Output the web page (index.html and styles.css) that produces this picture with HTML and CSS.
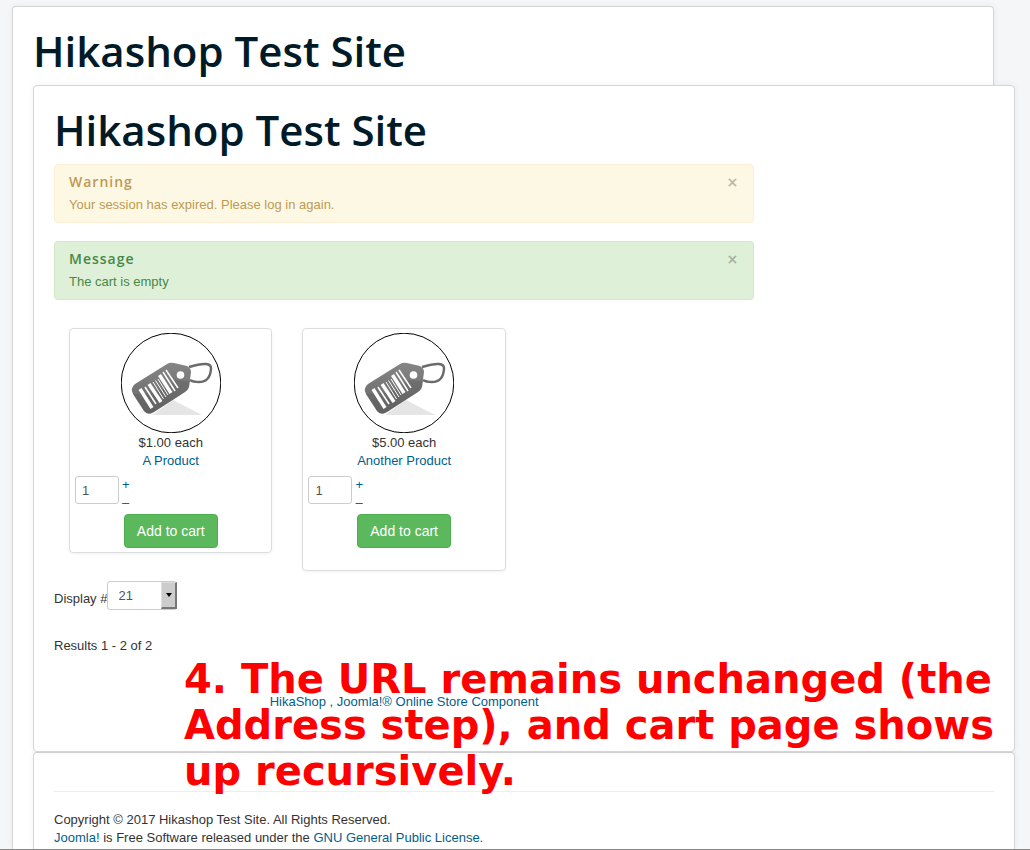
FILE: index.html
```html
<!DOCTYPE html>
<html lang="en">
<head>
  <meta charset="UTF-8">
  <meta name="viewport" content="width=device-width, initial-scale=1.0">
  <title>Hikashop Test Site</title>
  <link rel="stylesheet" href="styles.css">
</head>
<body>
  <!-- Shared product image -->
  <svg class="defs" width="0" height="0" aria-hidden="true">
    <defs>
      <linearGradient id="tagFill" x1="0" y1="0" x2="0" y2="1">
        <stop offset="0" stop-color="#858585"/>
        <stop offset="0.55" stop-color="#747474"/>
        <stop offset="1" stop-color="#666"/>
      </linearGradient>
      <symbol id="tag" viewBox="0 0 100 100">
        <circle cx="50" cy="50" r="49.8" fill="#fff" stroke="#000" stroke-width="1"/>
        <path d="M52 67 L81 82 H31 Z" fill="#e5e5e5"/>
        <path d="M14 51 L46 31 Q49 29 53 30 L66 33 Q70 35 70 39 L68 54 Q67 57 64 59 L33 79 Q27 83 23 78 L12 61 Q9 55 14 51 Z" fill="url(#tagFill)"/>
        <path d="M69 48 L68 54 Q67 57 64 59 L33 79 Q27 83 23 78 L12 61 Q44 62 54 47 Z" fill="#555" fill-opacity="0.3"/>
        <path d="M68 34 Q91 27 90 36 Q89 49 78 49 Q72 49 69 47" fill="none" stroke="#6b6b6b" stroke-width="2.5"/>
        <circle cx="59.500" cy="42" r="3.800" fill="#fff"/>
        <g stroke="#fff" fill="none">
          <path d="M19 56 L31 75" stroke-width="3.5"/>
          <path d="M24 54 L35 71" stroke-width="1.5"/>
          <path d="M28 51 L40 69" stroke-width="3.5"/>
          <path d="M32 49 L42.500 66" stroke-width="1"/>
          <path d="M34.500 47.500 L45 64" stroke-width="1"/>
          <path d="M37 46 L47 62" stroke-width="1"/>
          <path d="M38.500 42 L50 60" stroke-width="3.5"/>
          <path d="M42 39 L54 58" stroke-width="1.5"/>
          <path d="M45 37 L57 55" stroke-width="1.5"/>
        </g>
      </symbol>
    </defs>
  </svg>

  <div class="container outer">
    <h1 class="site-title">Hikashop Test Site</h1>

    <div class="container inner">
      <h1 class="site-title">Hikashop Test Site</h1>

      <main class="content">
        <div class="alert alert-warning">
          <button type="button" class="close" aria-label="Close">×</button>
          <h4>Warning</h4>
          <p>Your session has expired. Please log in again.</p>
        </div>
        <div class="alert alert-success">
          <button type="button" class="close" aria-label="Close">×</button>
          <h4>Message</h4>
          <p>The cart is empty</p>
        </div>

        <div class="products">
          <div class="product">
            <svg class="thumb" aria-hidden="true"><use href="#tag"/></svg>
            <span class="price">$1.00 each</span>
            <a href="#">A Product</a>
            <div class="quantity">
              <input type="text" value="1" aria-label="Quantity of A Product">
              <div class="steps">
                <a href="#">+</a>
                <a href="#">–</a>
              </div>
            </div>
            <button type="button" class="btn">Add to cart</button>
          </div>
          <div class="product tall">
            <svg class="thumb" aria-hidden="true"><use href="#tag"/></svg>
            <span class="price">$5.00 each</span>
            <a href="#">Another Product</a>
            <div class="quantity">
              <input type="text" value="1" aria-label="Quantity of Another Product">
              <div class="steps">
                <a href="#">+</a>
                <a href="#">–</a>
              </div>
            </div>
            <button type="button" class="btn">Add to cart</button>
          </div>
        </div>

        <div class="pagination">
          <label for="limit">Display #</label>
          <div class="select">
            <select id="limit">
              <option>21</option>
            </select>
            <span class="arrow"></span>
          </div>
        </div>
        <p class="results">Results 1 - 2 of 2</p>
        <p class="credit"><a href="#">HikaShop , Joomla!® Online Store Component</a></p>
      </main>

      <div class="note">4. The URL remains unchanged (the Address step), and cart page shows up recursively.</div>
    </div>

    <footer class="container footer">
      <hr>
      <p>Copyright © 2017 Hikashop Test Site. All Rights Reserved.</p>
      <p><a href="#">Joomla!</a> is Free Software released under the <a href="#">GNU General Public License.</a></p>
    </footer>
  </div>
</body>
</html>
```
FILE: styles.css
```css
* {
  box-sizing: border-box;
}
body {
  min-height: 100vh;
  margin: 0;
  padding: 6px 36px 0 12px;
  display: flex;
  flex-direction: column;
  background: #f4f6f7;
  border-bottom: 1px solid #888;
  color: #333;
  font-family: "Liberation Sans", Arial, sans-serif;
  font-size: 13px;
  line-height: 18px;
}
p {
  margin: 0;
}
a {
  color: #005e8d;
  text-decoration: none;
}
.defs {
  position: absolute;
}

.container {
  padding: 20px;
  background: #fff;
  border: 1px solid #d5d5d5;
  border-radius: 4px;
  box-shadow: 0 0 6px rgba(0,0,0,0.06);
}
.outer {
  flex: 1;
  display: flex;
  flex-direction: column;
  padding-bottom: 0;
  border-bottom: 0;
  border-radius: 4px 4px 0 0;
}
.inner, .footer {
  margin-right: -42px;
}
.inner {
  position: relative;
}
.footer {
  flex: 1;
  padding: 38px 20px 2px;
  border-bottom: 0;
  border-radius: 4px 4px 0 0;
}
.footer hr {
  margin: 0 0 19px;
  border: 0;
  border-top: 1px solid #eee;
}

.site-title {
  margin: 0 0 10px;
  color: #001a27;
  font-family: "Open Sans", sans-serif;
  font-size: 42px;
  font-weight: 600;
  line-height: 48px;
}
.content {
  width: 74.5%;
}

/* Messages */
.alert {
  position: relative;
  margin-bottom: 18px;
  padding: 8px 14px;
  border: 1px solid;
  border-radius: 4px;
}
.alert h4 {
  margin: 0 0 5px;
  font-family: "Open Sans", sans-serif;
  font-size: 14px;
  font-weight: 600;
  letter-spacing: 1px;
  line-height: 18px;
}
.alert-warning {
  background: #fcf8e3;
  border-color: #fbeed5;
  color: #c09853;
}
.alert-success {
  background: #dff0d8;
  border-color: #d0e9c6;
  color: #468847;
}
.close {
  position: absolute;
  top: 8px;
  right: 15px;
  padding: 0;
  border: 0;
  background: none;
  color: #000;
  font-family: "DejaVu Sans", sans-serif;
  font-size: 14px;
  font-weight: bold;
  line-height: 18px;
  opacity: 0.25;
}

/* Products */
.products {
  display: grid;
  grid-template-columns: repeat(3, 1fr);
  align-items: start;
  margin-top: 28px;
}
.product {
  display: flex;
  flex-direction: column;
  align-items: center;
  margin: 0 15px;
  padding: 4px 5px;
  border: 1px solid #ddd;
  border-radius: 4px;
  box-shadow: 0 1px 3px rgba(0,0,0,0.06);
}
.product.tall {
  padding-bottom: 22px;
}
.thumb {
  width: 100px;
  height: 100px;
  margin-bottom: 1px;
}
.quantity {
  display: flex;
  align-self: stretch;
  gap: 3px;
  margin: 6px 0 2px;
}
.quantity input {
  width: 44px;
  height: 28px;
  padding: 4px 6px;
  border: 1px solid #ccc;
  border-radius: 3px;
  color: #555;
  font-family: inherit;
  font-size: 13px;
}
.steps {
  display: flex;
  flex-direction: column;
}
.btn {
  height: 34px;
  padding: 0 12px;
  border: 1px solid #4cae4c;
  border-radius: 4px;
  background: #5cb85c;
  color: #fff;
  font-family: inherit;
  font-size: 14px;
}

/* Pagination */
.pagination {
  display: flex;
  align-items: center;
  margin-top: 10px;
}
.pagination label {
  padding-top: 6px;
}
.select {
  position: relative;
}
.select select {
  appearance: none;
  display: block;
  width: 70px;
  height: 29px;
  padding: 0 10px;
  border: 1px solid #ccc;
  border-radius: 3px;
  background: #fff;
  color: #555;
  font-family: inherit;
  font-size: 13px;
}
.arrow {
  position: absolute;
  top: 1px;
  right: 0;
  width: 16px;
  height: 27px;
  display: flex;
  align-items: center;
  justify-content: center;
  border: 1px solid;
  border-color: #ddd #777 #777 #ddd;
  border-right-width: 2px;
  border-bottom-width: 2px;
  background: #ccc;
  pointer-events: none;
}
.arrow::after {
  content: "";
  border: 3px solid transparent;
  border-top: 4px solid #000;
  border-bottom: 0;
}
.results {
  margin-top: 27px;
}
.credit {
  margin: 38px 0 20px;
  text-align: center;
}

/* Caption laid over the page */
.note {
  position: absolute;
  left: 150px;
  right: 0;
  bottom: -43px;
  z-index: 1;
  color: #f00;
  font-family: "DejaVu Sans", sans-serif;
  font-size: 40px;
  font-weight: bold;
  line-height: 46px;
  pointer-events: none;
}
```
